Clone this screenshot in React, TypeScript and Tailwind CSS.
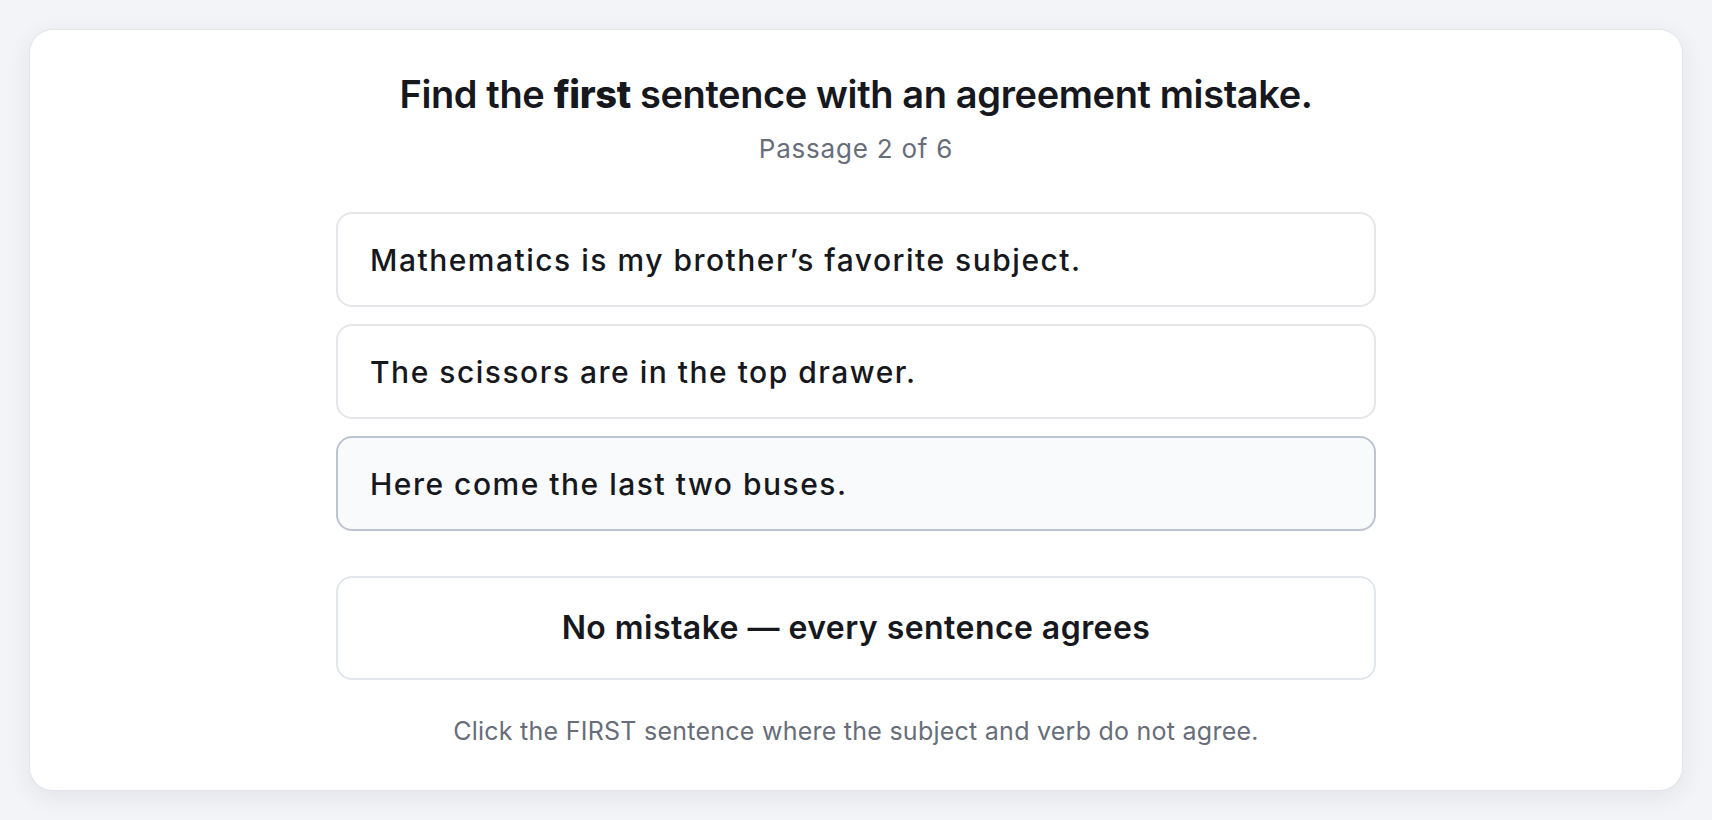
import React, { useState } from "react";

const sentences = [
  "Mathematics is my brother\u2019s favorite subject.",
  "The scissors are in the top drawer.",
  "Here come the last two buses.",
];

const App: React.FC = () => {
  const [hovered, setHovered] = useState<number | null>(2);

  return (
    <div
      className="min-h-screen bg-[#f3f4f7] p-[29px] text-[#16181d]"
      style={{ fontFamily: "Inter, 'Noto Sans', sans-serif" }}
    >
      <div className="flex flex-col items-center rounded-3xl border border-[#e3e5ea] bg-white pt-[44px] pb-[43px] shadow-[0_6px_24px_rgba(30,41,59,0.08)]">
        <h1 className="text-center text-[38px] leading-10 font-semibold tracking-[-0.01em]">
          Find the <span className="font-extrabold">first</span> sentence with an agreement mistake.
        </h1>
        <p className="mt-[19px] text-[26px] leading-8 tracking-[0.03em] text-[#676d79]">Passage 2 of 6</p>

        <div className="mt-[47px] flex w-[1040px] flex-col gap-[17px]">
          {sentences.map((s, i) => (
            <button
              key={i}
              type="button"
              onMouseEnter={() => setHovered(i)}
              className={
                "flex h-[95px] items-center rounded-2xl border-2 px-8 text-left text-[30px] leading-9 font-[550] tracking-[0.05em] " +
                (hovered === i
                  ? "border-[#bcc3d2] bg-[#f9fafc]"
                  : "border-[#e5e7eb] bg-white")
              }
            >
              {s}
            </button>
          ))}
        </div>

        <button
          type="button"
          className="mt-[45px] flex h-[104px] w-[1040px] items-center justify-center rounded-2xl border-2 border-[#e3e6ec] bg-white text-[32px] leading-9 font-semibold tracking-[0.014em]"
        >
          No mistake — every sentence agrees
        </button>

        <p className="mt-[35px] text-[25px] leading-8 tracking-[0.01em] text-[#676d79]">
          Click the FIRST sentence where the subject and verb do not agree.
        </p>
      </div>
    </div>
  );
};

export default App;
